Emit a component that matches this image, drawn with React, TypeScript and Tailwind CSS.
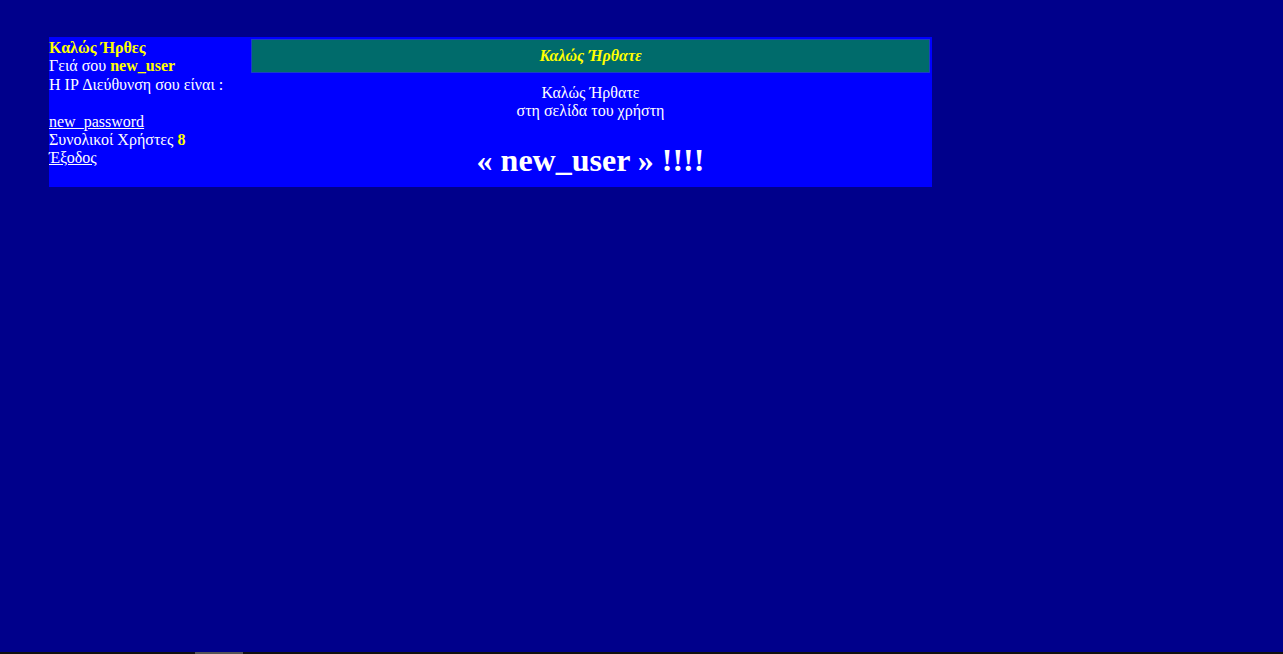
export default function App() {
  return (
    <div
      className="flex h-[654px] w-full flex-col bg-[#00008b] text-white"
      style={{ fontFamily: '"Liberation Serif", "Times New Roman", serif' }}
    >
      <div className="flex-1 pl-[49px] pt-[37px]">
        <div className="flex h-[150px] w-[883px] bg-[#0000ff] text-[16px] leading-[18.4px]">
          {/* Left column */}
          <div className="w-[202px] shrink-0 pt-[2px]">
            <p className="font-bold text-[#ffff00]">Καλώς Ήρθες</p>
            <p>
              Γειά σου <b className="text-[#ffff00]">new_user</b>
            </p>
            <p>Η IP Διεύθυνση σου είναι :</p>
            <p>&nbsp;</p>
            <p>
              <a href="#" className="underline">new_password</a>
            </p>
            <p>
              Συνολικοί Χρήστες <b className="text-[#ffff00]">8</b>
            </p>
            <p>
              <a href="#" className="underline">Έξοδος</a>
            </p>
          </div>

          {/* Right column */}
          <div className="flex flex-1 flex-col pr-[2px] pt-[2px]">
            <div className="flex h-[34px] items-center justify-center border border-[#1a3fc4] bg-[#006b6b]">
              <span className="font-bold italic text-[#ffff00]">Καλώς Ήρθατε</span>
            </div>
            <div className="pt-[11px] text-center">
              <p>Καλώς Ήρθατε</p>
              <p>στη σελίδα του χρήστη</p>
              <p className="mt-[21px] text-[32px] font-bold leading-[37px]">« new_user » !!!!</p>
            </div>
          </div>
        </div>
      </div>
      <div className="flex h-[2px] bg-[#111111]">
        <div className="ml-[195px] w-[48px] bg-[#555555]" />
      </div>
    </div>
  );
}
